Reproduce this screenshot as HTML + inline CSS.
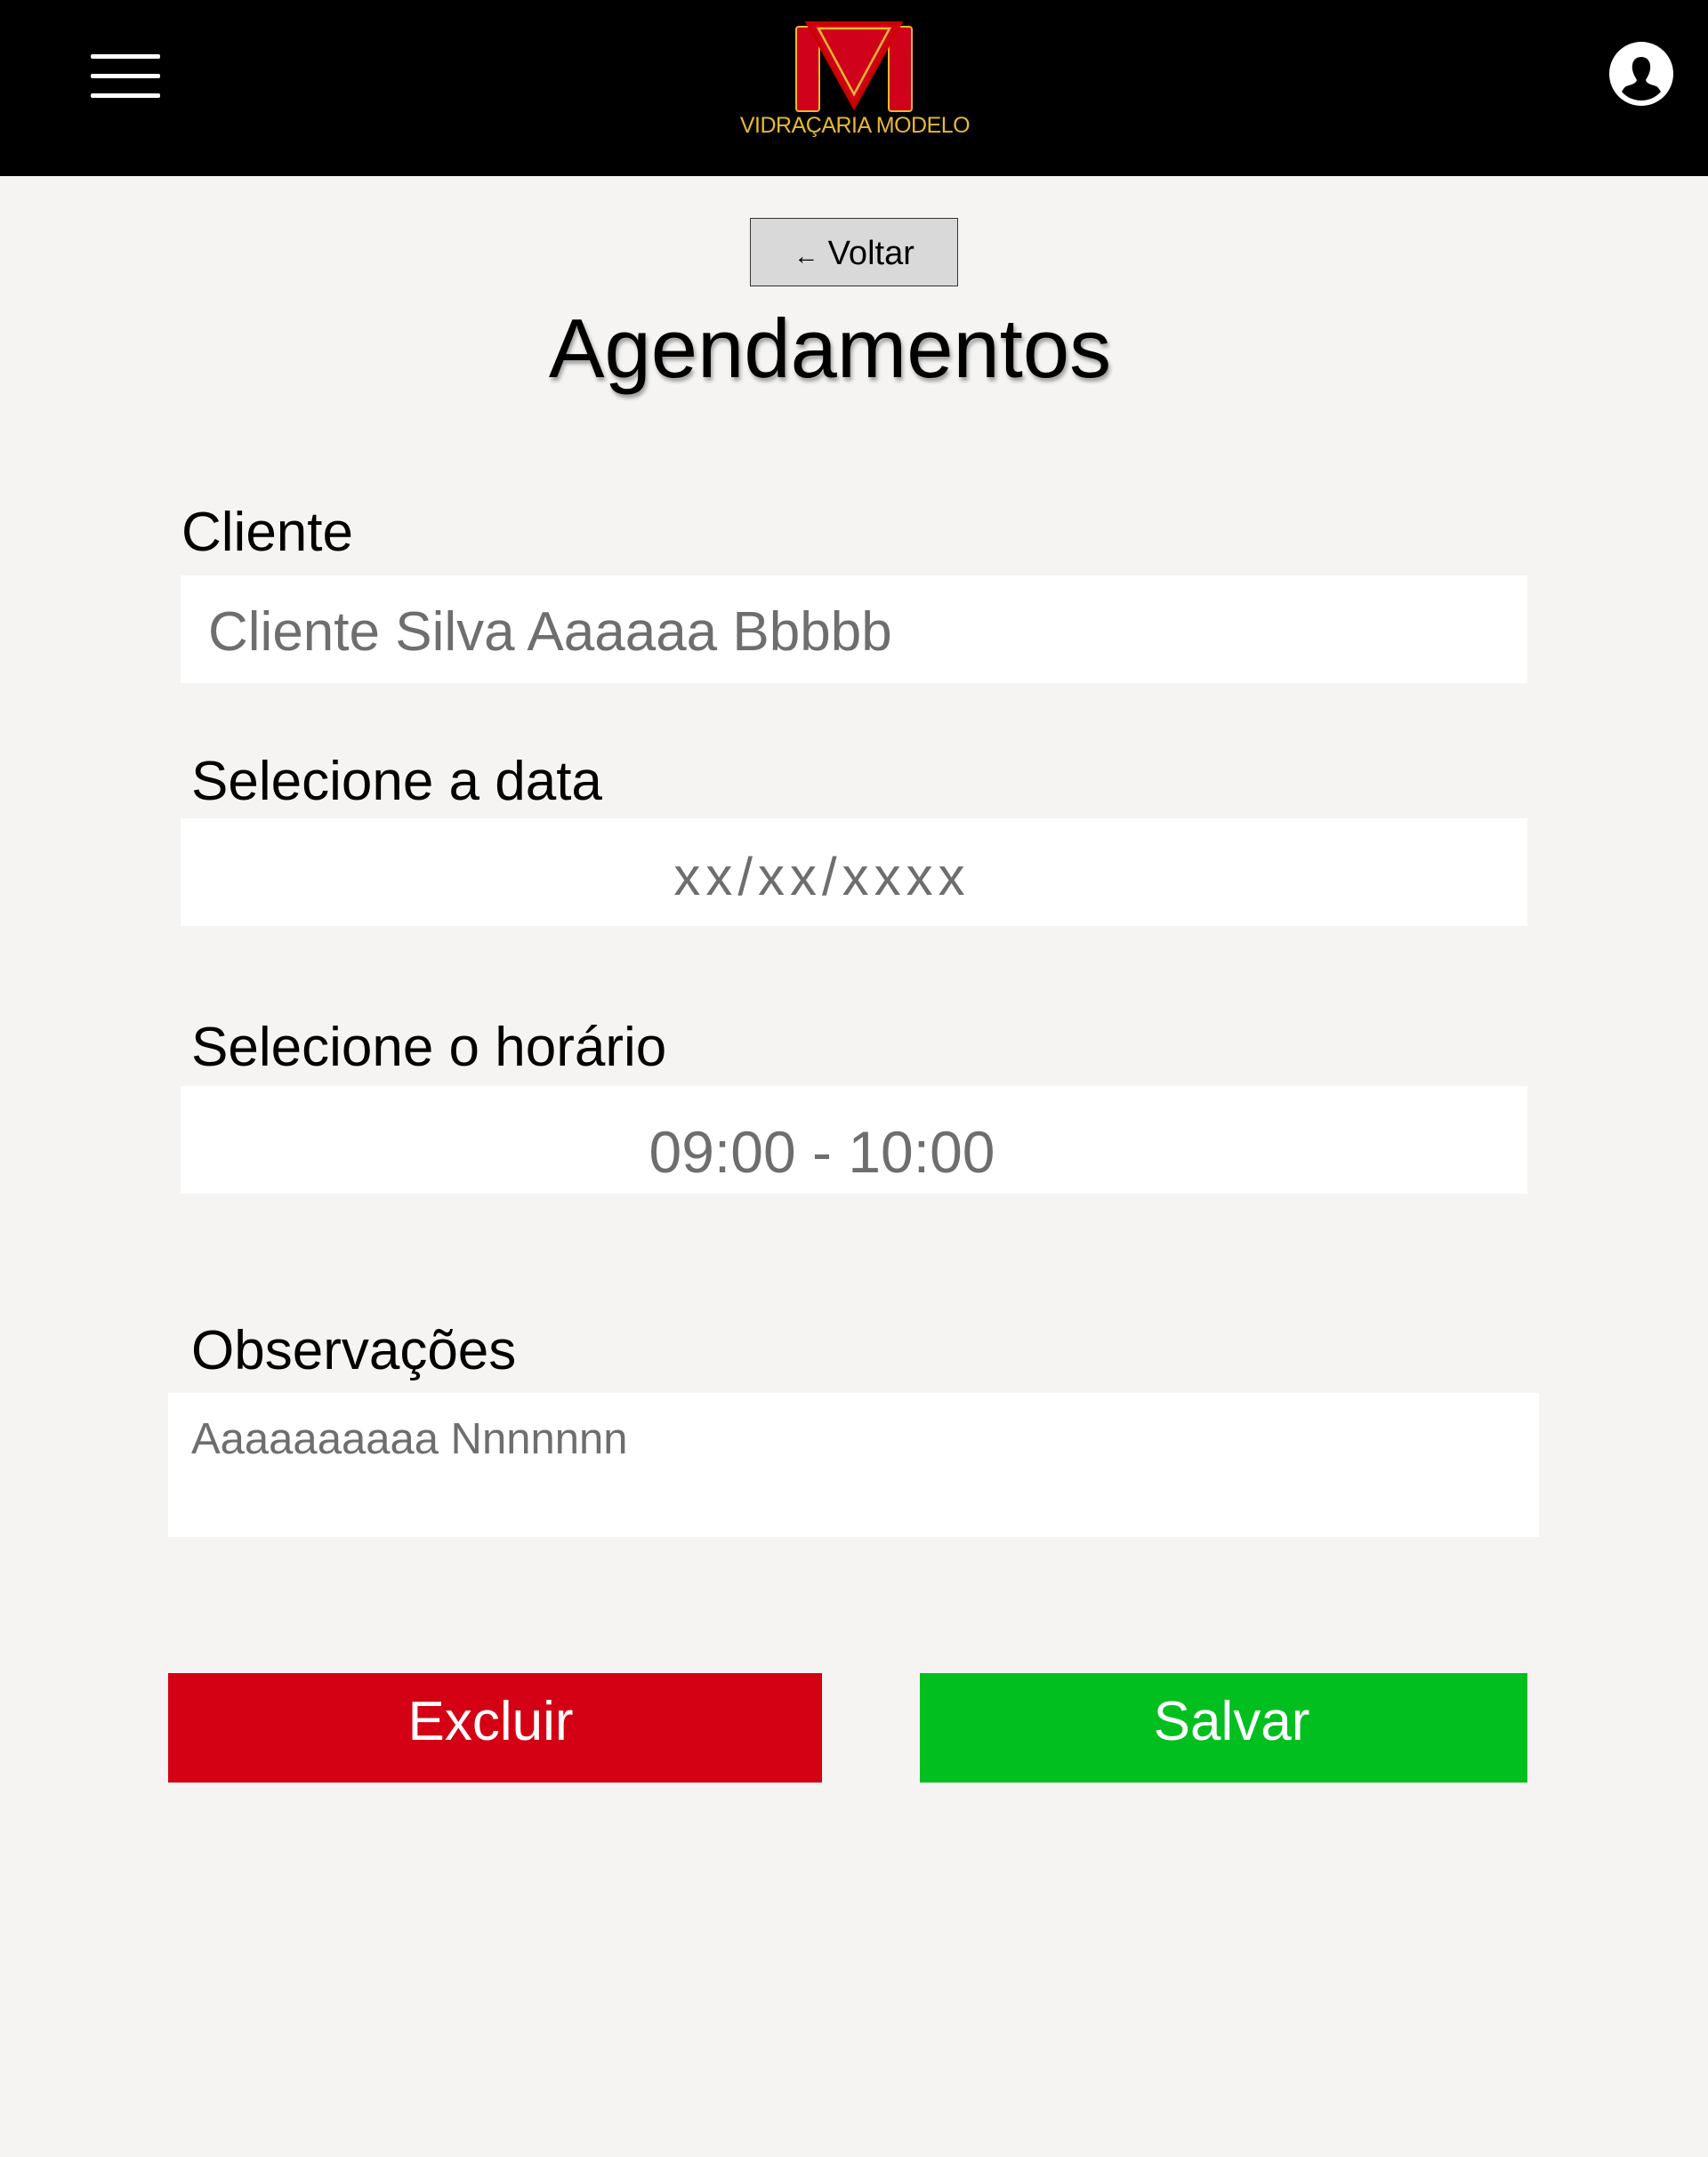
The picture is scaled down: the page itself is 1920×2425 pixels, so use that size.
<!DOCTYPE html>
<html><head><meta charset="utf-8"><style>
*{margin:0;padding:0;box-sizing:border-box}
body{width:1920px;height:2425px;background:#f5f4f2;font-family:"Liberation Sans",sans-serif;position:relative;overflow:hidden}
.hdr{position:absolute;left:0;top:0;width:1920px;height:198px;background:#000}
.ham{position:absolute;left:102px;width:78px;height:5px;background:#fff;border-radius:2px}
.abs{position:absolute}
.lbl{position:absolute;font-size:62px;color:#000;line-height:1}
.inp{position:absolute;background:#fff}
.btn{position:absolute;color:#fff;font-size:62px;text-align:center;line-height:110px}
</style></head><body>
<div class="hdr">
<div class="ham" style="top:61px"></div>
<div class="ham" style="top:83px"></div>
<div class="ham" style="top:105px"></div>
<svg class="abs" style="left:880px;top:20px" width="160" height="140" viewBox="0 0 160 140">
<rect x="15" y="10" width="26" height="95" rx="3" fill="#d0021b" stroke="#e8b830" stroke-width="2"/>
<rect x="119" y="10" width="26" height="95" rx="3" fill="#d0021b" stroke="#e8b830" stroke-width="2"/>
<path d="M28 6 L132 6 L80 100 Z" fill="#d0021b" stroke="#c00" stroke-width="4"/>
<path d="M40 12 L120 12 L80 86 Z" fill="none" stroke="#e8b830" stroke-width="2.5"/>
</svg>
<div class="abs" style="left:823px;top:127px;width:276px;text-align:center;color:#e8b830;font-size:25px;letter-spacing:-0.5px">VIDRAÇARIA MODELO</div>
<svg class="abs" style="left:1809px;top:47px" width="72" height="72" viewBox="0 0 72 72">
<circle cx="36" cy="36" r="36" fill="#fff"/>
<path d="M36 17 C28 17 25 24 26 31 C27 37 30 41 31 43 C30 47 25 48 19 50 C16 52 15 55 14 56 C20 63 28 66 36 66 C44 66 52 63 58 56 C57 55 56 52 53 50 C47 48 42 47 41 43 C42 41 45 37 46 31 C47 24 44 17 36 17 Z" fill="#000"/>
</svg>
</div>
<div class="abs" style="left:843px;top:245px;width:234px;height:77px;background:#d9d9d9;border:1.5px solid #333;font-size:38px;text-align:center;line-height:78px;color:#000"><span style="font-size:28px">←</span> Voltar</div>
<div class="abs" style="left:0;top:332px;width:1866px;text-align:center;font-size:94px;line-height:120px;color:#000;text-shadow:2px 4px 4px rgba(0,0,0,.35)">Agendamentos</div>
<div class="lbl" style="left:204px;top:568px">Cliente</div>
<div class="inp" style="left:203px;top:647px;width:1514px;height:121px"></div>
<div class="abs" style="left:234px;top:680px;font-size:62px;color:#6e6e6e;line-height:1">Cliente Silva Aaaaaa Bbbbb</div>
<div class="lbl" style="left:215px;top:848px">Selecione a data</div>
<div class="inp" style="left:203px;top:920px;width:1514px;height:121px"></div>
<div class="abs" style="left:203px;top:956px;width:1442px;text-align:center;font-size:60px;color:#6e6e6e;line-height:1;letter-spacing:6px">xx/xx/xxxx</div>
<div class="lbl" style="left:215px;top:1147px">Selecione o horário</div>
<div class="inp" style="left:203px;top:1221px;width:1514px;height:121px"></div>
<div class="abs" style="left:203px;top:1262px;width:1442px;text-align:center;font-size:66px;color:#6e6e6e;line-height:1">09:00 - 10:00</div>
<div class="lbl" style="left:215px;top:1488px">Observações</div>
<div class="inp" style="left:189px;top:1566px;width:1541px;height:162px"></div>
<div class="abs" style="left:215px;top:1594px;font-size:49px;color:#6e6e6e;line-height:1">Aaaaaaaaaa Nnnnnnn</div>
<div class="btn" style="left:189px;top:1881px;width:735px;height:123px;background:#d40014;text-indent:-10px">Excluir</div>
<div class="btn" style="left:1034px;top:1881px;width:683px;height:123px;background:#00bf1f;text-indent:18px">Salvar</div>
</body></html>
